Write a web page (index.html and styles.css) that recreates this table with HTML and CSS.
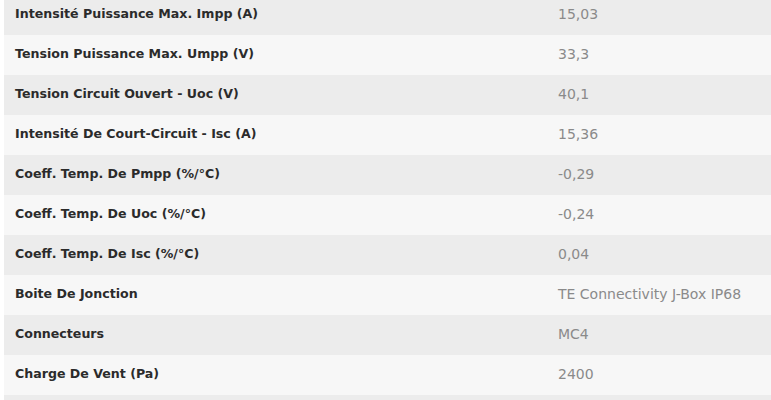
FILE: index.html
```html
<!DOCTYPE html>
<html lang="fr">
<head>
<meta charset="utf-8">
<link rel="stylesheet" href="styles.css">
</head>
<body>
<div class="wrap">
<table class="specs">
<tbody>
<tr><th>Intensité Puissance Max. Impp (A)</th><td>15,03</td></tr>
<tr><th>Tension Puissance Max. Umpp (V)</th><td>33,3</td></tr>
<tr><th>Tension Circuit Ouvert - Uoc (V)</th><td>40,1</td></tr>
<tr><th>Intensité De Court-Circuit - Isc (A)</th><td>15,36</td></tr>
<tr><th>Coeff. Temp. De Pmpp (%/°C)</th><td>-0,29</td></tr>
<tr><th>Coeff. Temp. De Uoc (%/°C)</th><td>-0,24</td></tr>
<tr><th>Coeff. Temp. De Isc (%/°C)</th><td>0,04</td></tr>
<tr><th>Boite De Jonction</th><td>TE Connectivity J-Box IP68</td></tr>
<tr><th>Connecteurs</th><td>MC4</td></tr>
<tr><th>Charge De Vent (Pa)</th><td>2400</td></tr>
<tr class="next"><th></th><td></td></tr>
</tbody>
</table>
</div>
</body>
</html>
```
FILE: styles.css
```css
html, body {
  margin: 0;
  padding: 0;
  background: #ffffff;
  overflow: hidden;
}
.wrap {
  padding-left: 4px;
  margin-top: -5px;
}
.specs {
  width: 771px;
  border-collapse: collapse;
  font-family: "DejaVu Sans", sans-serif;
}
.specs tr {
  height: 40px;
}
.specs tr:nth-child(odd) {
  background: #ececec;
}
.specs tr:nth-child(even) {
  background: #f7f7f7;
}
.specs th {
  text-align: left;
  font-weight: 700;
  font-size: 12.6px;
  color: #2b2b2b;
  padding: 0 0 3px 11px;
  width: 543px;
}
.specs td {
  font-size: 14px;
  color: #8a8a8a;
  padding: 0 0 3px 0;
}
```
